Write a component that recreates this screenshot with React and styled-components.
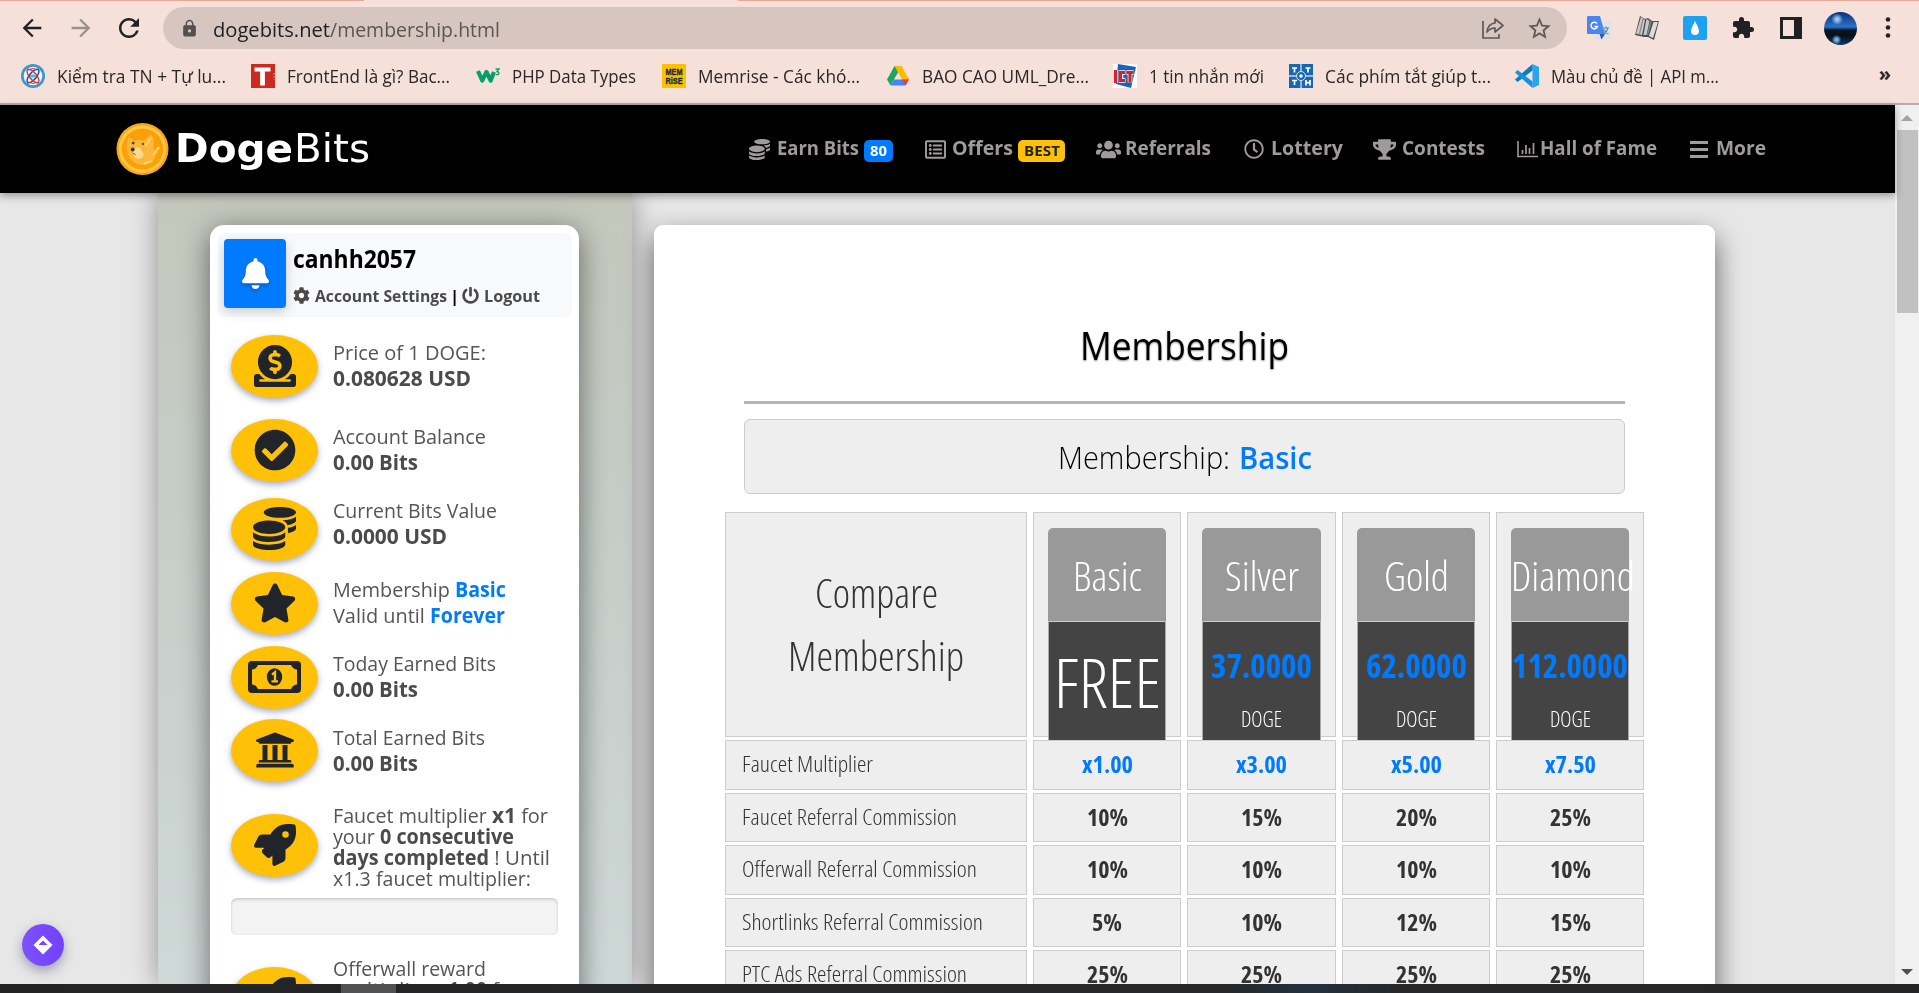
import React, { useLayoutEffect, useRef } from "react";
import styled, { createGlobalStyle, css } from "styled-components";
import { FaCoins, FaRegListAlt, FaUsers, FaRegClock, FaTrophy, FaBell, FaCog, FaPowerOff, FaDonate, FaCheckCircle, FaUniversity, FaRocket } from "react-icons/fa";
import { FaStar } from "react-icons/fa6";
import { MdArrowBack, MdArrowForward, MdRefresh, MdLock, MdExtension, MdStarBorder } from "react-icons/md";

const Global = createGlobalStyle`
  * { box-sizing: border-box; }
  html, body { margin: 0; height: 100%; overflow: hidden; }
  body { font-family: "Open Sans", "Noto Sans", sans-serif; background: #e7e7e7; }
  svg { display: block; flex: none; }
`;

/* ---------- fitted text ---------- */
const FitBox = styled.span`
  display: inline-block;
  flex: none;
  white-space: pre;
  text-align: left;
  width: ${(p) => p.$w}px;
`;
const FitInner = styled.span`
  display: inline-block;
  transform-origin: 0 50%;
`;
function Fit({ w, children }) {
  const ref = useRef(null);
  useLayoutEffect(() => {
    const el = ref.current;
    el.style.transform = "none";
    const natural = el.getBoundingClientRect().width;
    el.style.transform = `scaleX(${w / natural})`;
  }, [w, children]);
  return (
    <FitBox $w={w}>
      <FitInner ref={ref}>{children}</FitInner>
    </FitBox>
  );
}

/* ---------- browser chrome ---------- */
const Screen = styled.div`
  width: 1919px;
  height: 993px;
  display: flex;
  flex-direction: column;
  overflow: hidden;
`;
const Chrome = styled.header`
  height: 105px;
  flex: none;
  background: #f5e0da;
  border-bottom: 2px solid #bbaaa5;
`;
const TabEdge = styled.div`
  display: flex;
  justify-content: space-between;
  height: 1px;
  &::before { content: ""; width: 364px; background: #e9a898; }
  &::after { content: ""; width: 1181px; background: #e9a898; }
`;
const Toolbar = styled.div`
  display: flex;
  align-items: center;
  height: 54px;
  color: #202124;
`;
const ToolIcon = styled.span`
  width: ${(p) => p.$w}px;
  display: flex;
  justify-content: center;
  flex: none;
  color: ${(p) => p.$c || "#202124"};
`;
const Address = styled.div`
  width: 1404px;
  height: 42px;
  margin-left: 4px;
  margin-right: 8px;
  border-radius: 21px;
  background: #d7c6bf;
  display: flex;
  align-items: center;
  padding: 0 4px 0 16px;
  font-size: 20.500px;
  color: #5c5553;
`;
const Url = styled.span`
  flex: 1;
  display: flex;
  margin-left: 14px;
  line-height: 40px;
  padding-top: 1px;
  b { font-weight: 400; color: #202124; }
`;
const Bookmarks = styled.nav`
  display: flex;
  align-items: center;
  height: 42px;
  padding-left: 21px;
  font-size: 17.5px;
  color: #2b2627;
  line-height: 40px;
`;
const Bookmark = styled.div`
  display: flex;
  align-items: center;
  gap: 12px;
  width: ${(p) => p.$w}px;
`;
const Overflow = styled.span`
  margin-left: auto;
  margin-right: 28px;
  font-weight: 700;
  font-size: 20px;
  line-height: 34px;
  padding-bottom: 5px;
`;
const Avatar = styled.span`
  width: 33px;
  height: 33px;
  border-radius: 50%;
  background: radial-gradient(circle at 40% 22%, #9cc8f5 0 4%, transparent 18%),
    radial-gradient(circle at 38% 84%, #6fb2e6 0 4%, transparent 14%),
    linear-gradient(#0b2f7a, #2a72c8 45%, #0b1524 55%, #071018 72%, #0d3a66);
`;

const icon = { width: 24, height: 24, viewBox: "0 0 24 24" };
const bookmarks = [
  { w: 230, tw: 169, text: "Kiểm tra TN + Tự lu...", art: (
    <svg {...icon}><circle cx="12" cy="12" r="12" fill="#3a97cf" /><circle cx="12" cy="12" r="9.3" fill="#eef5fa" />
      <g fill="none" strokeWidth="1.4"><ellipse cx="12" cy="12" rx="3.4" ry="8.4" stroke="#22438f" transform="rotate(40 12 12)" /><ellipse cx="12" cy="12" rx="3.4" ry="8.4" stroke="#d23a3a" transform="rotate(-40 12 12)" /></g>
      <path d="M7 6q5-3 10 0M7 18q5 3 10 0" stroke="#d23a3a" fill="none" />
      <rect x="9" y="10.5" width="6" height="3" fill="#5bb3dd" /></svg>) },
  { w: 225, tw: 163, text: "FrontEnd là gì? Bac...", art: (
    <svg {...icon}><rect width="24" height="24" fill="#cc2a1f" /><path d="M3.5 3.5h16v4h-5.600v14h-4.800v-14H3.500z" fill="#fff" /><path d="M23 9v7" stroke="#e98079" strokeDasharray="2 1" /></svg>) },
  { w: 186, tw: 124, text: "PHP Data Types", art: (
    <svg {...icon}><path d="M2 7l4.200 9.500L10.500 8l4.200 8.500L18 8" fill="none" stroke="#04a06c" strokeWidth="4.200" strokeLinejoin="round" /><path d="M19.500 5h3.500l-2 2.500c3 0 2.500 4-1 3" fill="none" stroke="#04a06c" strokeWidth="1.300" /></svg>) },
  { w: 224, tw: 162, text: "Memrise - Các khó...", art: (
    <svg {...icon}><rect width="24" height="24" fill="#fcc200" /><g fontFamily="Liberation Sans" fontWeight="700" fontSize="9.500" fill="#1c2b3c" stroke="#1c2b3c" strokeWidth="0.4" textAnchor="middle"><text x="12" y="11.3" textLength="17" lengthAdjust="spacingAndGlyphs">MEM</text><text x="12" y="19.800" textLength="17" lengthAdjust="spacingAndGlyphs">RiSE</text></g></svg>) },
  { w: 227, tw: 167, text: "BAO CAO UML_Dre...", art: (
    <svg {...icon}><path d="M8.500 2h7L12 8.500 4.500 21.500 1 15.500z" fill="#1fa463" /><path d="M8.500 2h7L23 15.500h-7z" fill="#ffba00" /><path d="M8 15.500h15L19.500 21.500h-15z" fill="#4285f4" /><path d="M16 15.500h7l-3.500 6z" fill="#ea4335" /></svg>) },
  { w: 176, tw: 115, text: "1 tin nhắn mới", art: (
    <svg {...icon}><rect width="24" height="24" fill="#fff" /><path d="M5 0l18 3-5 21-15-4z" fill="#1b64b2" /><g fill="none" stroke="#fff" strokeWidth="4.600"><path d="M2.500 6v13M12.500 8.500H8v8h4.500M13.500 8.500h7M17 8.500v10" /></g><g fill="none" stroke="#d8202a" strokeWidth="3.200"><path d="M2.500 6v13M12 8.500H7.500v8H12M13.500 8.500h7M17 8.500v10" /></g></svg>) },
  { w: 226, tw: 166, text: "Các phím tắt giúp t...", art: (
    <svg {...icon}><rect width="24" height="24" fill="#1767b1" /><path d="M12 0v24M0 12h24" stroke="#bcd7ee" strokeWidth="1.400" /><circle cx="12" cy="12" r="4.500" fill="#1767b1" stroke="#dcebf7" /><circle cx="12" cy="12" r="1.800" fill="#fff" /><path d="M3 4h5M5.500 4v4.500M16.500 4h5M19 4v4.500M3 16.500h5M5.500 16.500v4.500M17 16v5.500M21 16v5.500M17 18.700h4" stroke="#fff" strokeWidth="1.700" /></svg>) },
  { w: 230, tw: 168, text: "Màu chủ đề | API m...", art: (
    <svg {...icon}><path d="M17.500 0L24 3v18l-6.500 3z" fill="#27a7f2" /><path d="M17.500 0L0 15.500 2.500 18 17.500 6.500z" fill="#0b7bc4" /><path d="M17.500 24L0 8.500 2.500 6l15 11.500z" fill="#1193df" /></svg>) },
];

/* ---------- page ---------- */
const Viewport = styled.div`
  display: flex;
  height: 879px;
  flex: none;
`;
const Page = styled.div`
  width: 1895px;
  display: flex;
  flex-direction: column;
  background: #e7e7e7;
  position: relative;
`;
const Scrollbar = styled.div`
  width: 24px;
  background: #f0f0f0;
  display: flex;
  flex-direction: column;
  align-items: center;
  justify-content: space-between;
  padding: 10px 0 9px;
`;
const Thumb = styled.div`
  width: 21px;
  height: 183px;
  margin-top: 9px;
  margin-bottom: auto;
  background: #c1c1c1;
`;
const NavBar = styled.nav`
  height: 88px;
  flex: none;
  background: #000;
  display: flex;
  align-items: center;
  padding-left: 116px;
  position: relative;
  z-index: 2;
  box-shadow: 0 3px 8px rgba(0, 0, 0, 0.35);
`;
const Brand = styled.div`
  display: flex;
  align-items: center;
  width: 633px;
  color: #fff;
  font: 400 39px/50px "DejaVu Sans", sans-serif;
  b { font-weight: 700; }
`;
const BrandName = styled.span`
  display: flex;
  margin-left: 5px;
  gap: 1px;
`;
const NavItem = styled.a`
  display: flex;
  align-items: center;
  width: ${(p) => p.$w}px;
  flex: none;
  font-size: 20px;
  font-weight: 700;
  color: #9f9b9a;
`;
const NavLabel = styled.span`
  margin-left: ${(p) => p.$gap}px;
  line-height: 28px;
  padding-bottom: 2px;
`;
const Badge = styled.span`
  height: 22px;
  width: ${(p) => p.$w}px;
  margin: 4px 0 0 5px;
  border-radius: 5px;
  display: flex;
  align-items: center;
  justify-content: center;
  font-size: 15px;
  line-height: 20px;
  padding-bottom: 3px;
  background: ${(p) => (p.$gold ? "#ffc107" : "#007bff")};
  color: ${(p) => (p.$gold ? "#212529" : "#fff")};
`;
const Body = styled.div`
  flex: 1;
  min-height: 0;
  display: flex;
  gap: 22px;
  padding-left: 158px;
  overflow: hidden;
`;
const Side = styled.aside`
  width: 474px;
  flex: none;
  padding: 32px 53px 0 52px;
  background: linear-gradient(#c4c7bb, #c5cdc8 40%, #ced8d6);
  box-shadow: 0 0 26px rgba(0, 0, 0, 0.38);
`;
const SideCard = styled.section`
  height: 900px;
  border-radius: 14px;
  background: #fff;
  box-shadow: 0 6px 28px rgba(0, 0, 0, 0.5);
  padding: 8px 7px 0 8px;
`;
const UserPanel = styled.div`
  height: 84px;
  display: flex;
  padding: 6px;
  border-radius: 6px;
  background: #f8f9fa;
`;
const BellButton = styled.button`
  width: 62px;
  height: 69px;
  border: 0;
  padding: 0;
  border-radius: 4px;
  background: #007bff;
  color: #fff;
  display: flex;
  align-items: center;
  justify-content: center;
  box-shadow: 0 4px 12px rgba(0, 0, 0, 0.18);
  svg { filter: drop-shadow(0 2px 2px rgba(0, 0, 0, 0.25)); }
`;
const UserInfo = styled.div`
  margin-left: 7px;
  font-weight: 700;
`;
const UserName = styled.div`
  font-size: 24.500px;
  line-height: 40px;
  color: #000;
`;
const UserLinks = styled.div`
  display: flex;
  align-items: center;
  font-size: 16.500px;
  line-height: 33px;
  color: #4a4a4a;
  i { font-style: normal; color: #000; margin: 0 3px 0 3px; }
`;
const LinkText = styled.a`
  margin-left: 5px;
`;
const Stats = styled.div`
  padding: 18px 0 0 13px;
`;
const StatRow = styled.div`
  display: flex;
  height: ${(p) => p.$h}px;
  gap: 15px;
`;
const Oval = styled.span`
  flex: none;
  width: 87px;
  height: 63px;
  margin-top: ${(p) => p.$top || 0}px;
  border-radius: 50%;
  background: #ffc107;
  color: #212529;
  display: flex;
  align-items: center;
  justify-content: center;
  padding-bottom: 2px;
  box-shadow: 0 3px 6px rgba(40, 50, 90, 0.4);
`;
const StatText = styled.div`
  margin-top: ${(p) => p.$top + 0.5}px;
  font-size: 20.5px;
  line-height: ${(p) => (p.$tight ? 21 : 26)}px;
  color: #555;
`;
const StatLine = styled.div`
  display: flex;
  height: ${(p) => (p.$tight ? 21 : 26)}px;
  b { color: ${(p) => (p.$blue ? "#007bff" : "#4b4b4b")}; }
`;
const Progress = styled.div`
  width: 327px;
  height: 37px;
  border-radius: 6px;
  background: #f3f3f3;
  box-shadow: inset 0 2px 3px rgba(0, 0, 0, 0.13), inset 0 0 2px rgba(0, 0, 0, 0.1);
  margin-bottom: 20px;
`;

const Main = styled.main`
  width: 1061px;
  height: 900px;
  flex: none;
  margin-top: 32px;
  border-radius: 9px;
  background: #fff;
  box-shadow: 0 12px 28px rgba(0, 0, 0, 0.6);
  text-align: center;
  padding: 0 71px;
`;
const Title = styled.h1`
  margin: 0 19px;
  padding-top: 93px;
  height: 179px;
  border-bottom: 3px solid #b6b6b6;
  font-size: 38.5px;
  font-weight: 500;
  line-height: 55px;
  color: #000;
  text-shadow: 0 1px 2px rgba(0, 0, 0, 0.45);
`;
const Current = styled.div`
  margin: 15px 19px 18px;
  height: 75px;
  border: 1px solid #ccc;
  border-radius: 6px;
  background: #eee;
  display: flex;
  justify-content: center;
  gap: 9px;
  font-size: 31px;
  font-weight: 300;
  line-height: 74px;
  color: #000;
  b { color: #007bff; font-weight: 600; }
`;
const Table = styled.div`
  display: grid;
  grid-template-columns: 302px 148px 149px 148px 148px;
  column-gap: 6px;
  row-gap: 3px;
  grid-template-rows: 225px;
  grid-auto-rows: 49.5px;
  font-stretch: 75%;
`;
const cell = css`
  border: 1px solid #ccc;
  background: #eee;
`;
const Compare = styled.div`
  ${cell}
  padding-top: 49px;
  font-size: 40px;
  font-weight: 300;
  line-height: 62.500px;
  color: #333;
`;
const PlanCell = styled.div`
  ${cell}
  padding: 15px 14px 0;
`;
const PlanName = styled.div`
  height: 93px;
  border-radius: 5px 5px 0 0;
  background: #999;
  color: #fff;
  font-size: 41px;
  font-weight: 300;
  line-height: 94px;
  display: flex;
  justify-content: ${(p) => (p.$wide ? "flex-start" : "center")};
`;
const PlanPrice = styled.div`
  position: relative;
  height: 119px;
  border: 1px solid #ccc;
  border-color: #ccc #aaa;
  border-bottom: 0;
  background: #444;
  color: #fff;
  display: flex;
  flex-direction: column;
  align-items: center;
  font-weight: 300;
`;
const Free = styled.span`
  font-size: 68px;
  line-height: 119px;
  font-weight: 300;
`;
const Amount = styled.b`
  font-size: 33px;
  line-height: 88px;
  color: #007bff;
  font-weight: 700;
`;
const Coin = styled.span`
  font-size: 21.500px;
  line-height: 17px;
  font-weight: 300;
`;
const Label = styled.div`
  ${cell}
  text-align: left;
  padding-left: 16px;
  font-size: 22.500px;
  font-weight: 300;
  line-height: 46px;
  color: #333;
`;
const Value = styled.div`
  ${cell}
  font-size: 23px;
  font-weight: 700;
  line-height: 46px;
  color: ${(p) => (p.$blue ? "#007bff" : "#333")};
`;
const Taskbar = styled.footer`
  height: 9px;
  flex: none;
  display: flex;
  padding-left: 341px;
  background: linear-gradient(90deg, #232324, #26282a 64%, #22303d 68%, #26282a 73%, #232526);
  &::before { content: ""; width: 55px; background: #505152; }
`;
const FloatingButton = styled.button`
  position: absolute;
  left: 22px;
  top: 819px;
  width: 42px;
  height: 42px;
  border: 0;
  padding: 0;
  border-radius: 50%;
  background: linear-gradient(90deg, #7b52fb, #7240ff);
  box-shadow: 0 5px 12px rgba(60, 50, 100, 0.4);
  display: flex;
  align-items: center;
  justify-content: center;
`;

const Banknote = () => (
  <svg width="53" height="32" viewBox="0 0 53 33" preserveAspectRatio="none">
    <rect x="2" y="2" width="49" height="29" rx="2" fill="none" stroke="currentColor" strokeWidth="4" />
    <path d="M3 3h7a7 6 0 0 1-7 6zM50 3h-7a7 6 0 0 0 7 6zM3 30h7a7 6 0 0 0-7-6zM50 30h-7a7 6 0 0 1 7-6z" fill="currentColor" />
    <ellipse cx="26.500" cy="16.500" rx="7.700" ry="9" fill="currentColor" />
    <path d="M24 14l3-2.500v9M23.500 21h6.500" fill="none" stroke="#ffc107" strokeWidth="2.300" />
  </svg>
);

const navItems = [
  { w: 176, icon: <FaCoins size={21} />, gap: 7, tw: 82, text: "Earn Bits", badge: { w: 29, tw: 17, text: "80" } },
  { w: 171, icon: <FaRegListAlt size={21} />, gap: 6, tw: 61, text: "Offers", badge: { w: 47, tw: 36, text: "BEST", gold: true } },
  { w: 148, icon: <FaUsers size={25} />, gap: 4, tw: 86, text: "Referrals" },
  { w: 129, icon: <FaRegClock size={20} />, gap: 7, tw: 72, text: "Lottery" },
  { w: 144, icon: <FaTrophy size={23} />, gap: 6, tw: 83, text: "Contests" },
  { w: 173, icon: (
    <svg width="21" height="17" viewBox="0 0 21 17" fill="none" stroke="currentColor"><path d="M1 0v15.500h20" strokeWidth="1.600" /><path d="M5.500 9v4M9 4v9M12.500 7v6M16.500 2v11" strokeWidth="1.700" /></svg>
  ), gap: 2, tw: 117, text: "Hall of Fame" },
  { w: 80, icon: (
    <svg width="18" height="17" viewBox="0 0 18 17" stroke="currentColor" strokeWidth="3"><path d="M0 1.500h18M0 8.500h18M0 15.500h18" /></svg>
  ), gap: 8, tw: 50, text: "More" },
];

const plans = [
  { name: "Basic", nw: 69, price: null, values: ["x1.00", "10%", "10%", "5%", "25%"] },
  { name: "Silver", nw: 74, price: "37.0000", pw: 101, values: ["x3.00", "15%", "10%", "10%", "25%"] },
  { name: "Gold", nw: 65, price: "62.0000", pw: 101, values: ["x5.00", "20%", "10%", "12%", "25%"] },
  { name: "Diamond", nw: 124, price: "112.0000", pw: 116, values: ["x7.50", "25%", "10%", "15%", "25%"] },
];
const labels = [
  ["Faucet Multiplier", 131],
  ["Faucet Referral Commission", 215],
  ["Offerwall Referral Commission", 235],
  ["Shortlinks Referral Commission", 241],
  ["PTC Ads Referral Commission", 225],
];
const valueWidth = (v) => (v.startsWith("x") ? 51 : v.length === 2 ? 30 : 41);

export default function App() {
  return (
    <Screen>
      <Global />
      <Chrome>
        <TabEdge />
        <Toolbar>
          <ToolIcon $w={64}><MdArrowBack size={28} /></ToolIcon>
          <ToolIcon $w={34} $c="#9c908d"><MdArrowForward size={28} /></ToolIcon>
          <ToolIcon $w={61}><MdRefresh size={30} /></ToolIcon>
          <Address>
            <ToolIcon $w={20} $c="#55504f"><MdLock size={19} /></ToolIcon>
            <Url><b><Fit w={117}>dogebits.net</Fit></b><Fit w={170}>/membership.html</Fit></Url>
            <ToolIcon $w={47} $c="#5f5856">
              <svg width="24" height="24" viewBox="0 0 24 24" fill="none" stroke="currentColor" strokeWidth="1.700"><path d="M2 5v17h16v-4" /><path d="M14 3l8 6.500-8 6.500v-4c-4 0-6 1.500-8 4 .5-5 3-8.500 8-9z" strokeLinejoin="round" /></svg>
            </ToolIcon>
            <ToolIcon $w={47} $c="#5f5856"><MdStarBorder size={27} /></ToolIcon>
          </Address>
          <ToolIcon $w={48}>
            <svg {...icon}><rect x="9" y="5" width="15" height="18" fill="#dfe3e6" /><path d="M0 1a1 1 0 0 1 1-1h12l5 18H1a1 1 0 0 1-1-1z" fill="#4b86f0" /><path d="M12.500 18H18l-3.500 5.500z" fill="#3058b8" /><path d="M10 7.500a3.300 3.300 0 1 0 .5 3H7.500" stroke="#fff" strokeWidth="1.400" fill="none" /><path d="M16 12h6M19 10.500V12M21 12c-1 3-2.500 5-4 6M17 13.500c1 2 2.500 3.500 4.500 4.500" stroke="#5f8d99" strokeWidth="1.200" fill="none" /></svg>
          </ToolIcon>
          <ToolIcon $w={48}>
            <svg {...icon}><path d="M5 0l5 3 3-1 4 3 7 0-5 19-6-3-4 0L0 19z" fill="#4f4f4f" /><path d="M6 1l4 3-3 15-6-1.500zM11.500 3l3 2-3 14-3 0z" fill="#c9c9c9" /><path d="M18.500 6h4.500l-5 16-4-2z" fill="#dcdcdc" /><path d="M8 3L4.500 18M16 5.500L12.500 19" stroke="#8a8a8a" strokeWidth="1.200" /></svg>
          </ToolIcon>
          <ToolIcon $w={48}>
            <svg {...icon}><rect width="24" height="24" rx="2" fill="#1da1f2" /><path d="M12 5c1 3 4 6.500 4 10a4 4 0 0 1-8 0c0-3.500 3-7 4-10z" fill="#fff" /></svg>
          </ToolIcon>
          <ToolIcon $w={48}><MdExtension size={24} /></ToolIcon>
          <ToolIcon $w={47}>
            <svg width="22" height="22" viewBox="0 0 22 22"><rect x="1.500" y="1.500" width="19" height="19" fill="none" stroke="currentColor" strokeWidth="3" /><rect x="14" y="1" width="7" height="20" fill="currentColor" /></svg>
          </ToolIcon>
          <ToolIcon $w={52}><Avatar /></ToolIcon>
          <ToolIcon $w={44}>
            <svg width="6" height="24" viewBox="0 0 6 24" fill="currentColor"><circle cx="3" cy="3.500" r="2.300" /><circle cx="3" cy="11.500" r="2.300" /><circle cx="3" cy="19.500" r="2.300" /></svg>
          </ToolIcon>
        </Toolbar>
        <Bookmarks>
          {bookmarks.map((b) => (
            <Bookmark key={b.text} $w={b.w}>{b.art}<Fit w={b.tw}>{b.text}</Fit></Bookmark>
          ))}
          <Overflow>»</Overflow>
        </Bookmarks>
      </Chrome>

      <Viewport>
        <Page>
          <NavBar>
            <Brand>
              <svg width="54" height="54" viewBox="0 0 55 54">
                <circle cx="27" cy="27" r="26.500" fill="#f6a81c" />
                <circle cx="27" cy="27" r="22.500" fill="#fd9f0b" stroke="#ffc842" strokeWidth="3" />
                <path d="M13 14l6 5c4-2 7-2 9 0l8-7c3 5 3 9 2 13 4 6 3 12-3 16-7 4-15 2-19-3-5-4-7-14-3-24z" fill="#fbb73a" />
                <path d="M18 27c5-3 8-2 8 2 4 2 2 8-3 8s-7-6-5-10z" fill="#ffd88a" />
                <path d="M30 24l6-9M38 33l6-8M28 42l9-3" stroke="#ffcd5c" strokeWidth="2.500" />
                <circle cx="17.500" cy="21" r="1.500" fill="#444" /><circle cx="27.500" cy="22" r="1.300" fill="#7b5a20" /><circle cx="17" cy="27.500" r="2" fill="#333" /><path d="M17 31l3 2" stroke="#7b5a20" />
              </svg>
              <BrandName><b><Fit w={118}>Doge</Fit></b><Fit w={76}>Bits</Fit></BrandName>
            </Brand>
            {navItems.map((n) => (
              <NavItem key={n.text} $w={n.w}>
                {n.icon}
                <NavLabel $gap={n.gap}><Fit w={n.tw}>{n.text}</Fit></NavLabel>
                {n.badge && <Badge $w={n.badge.w} $gold={n.badge.gold}><Fit w={n.badge.tw}>{n.badge.text}</Fit></Badge>}
              </NavItem>
            ))}
          </NavBar>

          <Body>
            <Side>
              <SideCard>
                <UserPanel>
                  <BellButton><FaBell size={31} /></BellButton>
                  <UserInfo>
                    <UserName><Fit w={123}>canhh2057</Fit></UserName>
                    <UserLinks>
                      <FaCog size={17} /><LinkText><Fit w={132}>Account Settings</Fit></LinkText><i>|</i><FaPowerOff size={17} /><LinkText><Fit w={56}>Logout</Fit></LinkText>
                    </UserLinks>
                  </UserInfo>
                </UserPanel>
                <Stats>
                  <StatRow $h={84}>
                    <Oval><FaDonate size={42} /></Oval>
                    <StatText $top={3}><StatLine><Fit w={153}>Price of 1 DOGE:</Fit></StatLine><StatLine><b><Fit w={138}>0.080628 USD</Fit></b></StatLine></StatText>
                  </StatRow>
                  <StatRow $h={79}>
                    <Oval><FaCheckCircle size={42} /></Oval>
                    <StatText $top={3}><StatLine><Fit w={153}>Account Balance</Fit></StatLine><StatLine><b><Fit w={85}>0.00 Bits</Fit></b></StatLine></StatText>
                  </StatRow>
                  <StatRow $h={74}>
                    <Oval><FaCoins size={43} /></Oval>
                    <StatText $top={-2}><StatLine><Fit w={164}>Current Bits Value</Fit></StatLine><StatLine><b><Fit w={114}>0.0000 USD</Fit></b></StatLine></StatText>
                  </StatRow>
                  <StatRow $h={74}>
                    <Oval><FaStar size={44} /></Oval>
                    <StatText $top={3}><StatLine $blue><Fit w={122}>Membership </Fit><b><Fit w={51}>Basic</Fit></b></StatLine><StatLine $blue><Fit w={97}>Valid until </Fit><b><Fit w={75}>Forever</Fit></b></StatLine></StatText>
                  </StatRow>
                  <StatRow $h={73}>
                    <Oval><Banknote /></Oval>
                    <StatText $top={3}><StatLine><Fit w={163}>Today Earned Bits</Fit></StatLine><StatLine><b><Fit w={85}>0.00 Bits</Fit></b></StatLine></StatText>
                  </StatRow>
                  <StatRow $h={95}>
                    <Oval><FaUniversity size={40} /></Oval>
                    <StatText $top={4}><StatLine><Fit w={152}>Total Earned Bits</Fit></StatLine><StatLine><b><Fit w={85}>0.00 Bits</Fit></b></StatLine></StatText>
                  </StatRow>
                  <StatRow $h={84}>
                    <Oval><FaRocket size={42} /></Oval>
                    <StatText $tight $top={-10}>
                      <StatLine $tight><Fit w={159}>Faucet multiplier </Fit><b><Fit w={24}>x1</Fit></b><Fit w={32}> for</Fit></StatLine>
                      <StatLine $tight><Fit w={47}>your </Fit><b><Fit w={134}>0 consecutive</Fit></b></StatLine>
                      <StatLine $tight><b><Fit w={156}>days completed</Fit></b><Fit w={61}> ! Until</Fit></StatLine>
                      <StatLine $tight><Fit w={198}>x1.3 faucet multiplier:</Fit></StatLine>
                    </StatText>
                  </StatRow>
                  <Progress />
                  <StatRow $h={80}>
                    <Oval $top={12}><FaRocket size={42} /></Oval>
                    <StatText $tight $top={2}>
                      <StatLine $tight><Fit w={153}>Offerwall reward</Fit></StatLine>
                      <StatLine $tight><Fit w={104}>multiplier </Fit><b><Fit w={50}>x1.00</Fit></b><Fit w={32}> for</Fit></StatLine>
                    </StatText>
                  </StatRow>
                </Stats>
              </SideCard>
            </Side>

            <Main>
              <Title><Fit w={209}>Membership</Fit></Title>
              <Current><Fit w={172}>Membership:</Fit><b><Fit w={73}>Basic</Fit></b></Current>
              <Table>
                <Compare>
                  <div><Fit w={123}>Compare</Fit></div>
                  <div><Fit w={176}>Membership</Fit></div>
                </Compare>
                {plans.map((p) => (
                  <PlanCell key={p.name}>
                    <PlanName $wide={p.nw > 118}><Fit w={p.nw}>{p.name}</Fit></PlanName>
                    <PlanPrice>
                      {p.price ? (
                        <><Amount><Fit w={p.pw}>{p.price}</Fit></Amount><Coin><Fit w={41}>DOGE</Fit></Coin></>
                      ) : (
                        <Free><Fit w={107}>FREE</Fit></Free>
                      )}
                    </PlanPrice>
                  </PlanCell>
                ))}
                {labels.map(([text, w], i) => (
                  <React.Fragment key={text}>
                    <Label><Fit w={w}>{text}</Fit></Label>
                    {plans.map((p) => (
                      <Value key={p.name} $blue={i === 0}><Fit w={valueWidth(p.values[i])}>{p.values[i]}</Fit></Value>
                    ))}
                  </React.Fragment>
                ))}
              </Table>
            </Main>
          </Body>
          <FloatingButton>
            <svg width="20" height="20" viewBox="0 0 20 20"><path d="M10 0.500L19.500 10 10 19.500.500 10z" fill="#fff" /><path d="M10 5.500l4.500 4.500h-9z" fill="#7646fd" /></svg>
          </FloatingButton>
        </Page>
        <Scrollbar>
          <svg width="12" height="6" viewBox="0 0 12 6"><path d="M6 0l6 6H0z" fill="#a3a3a3" /></svg>
          <Thumb />
          <svg width="12" height="6" viewBox="0 0 12 6"><path d="M0 0h12L6 6z" fill="#505050" /></svg>
        </Scrollbar>
      </Viewport>
      <Taskbar />
    </Screen>
  );
}
